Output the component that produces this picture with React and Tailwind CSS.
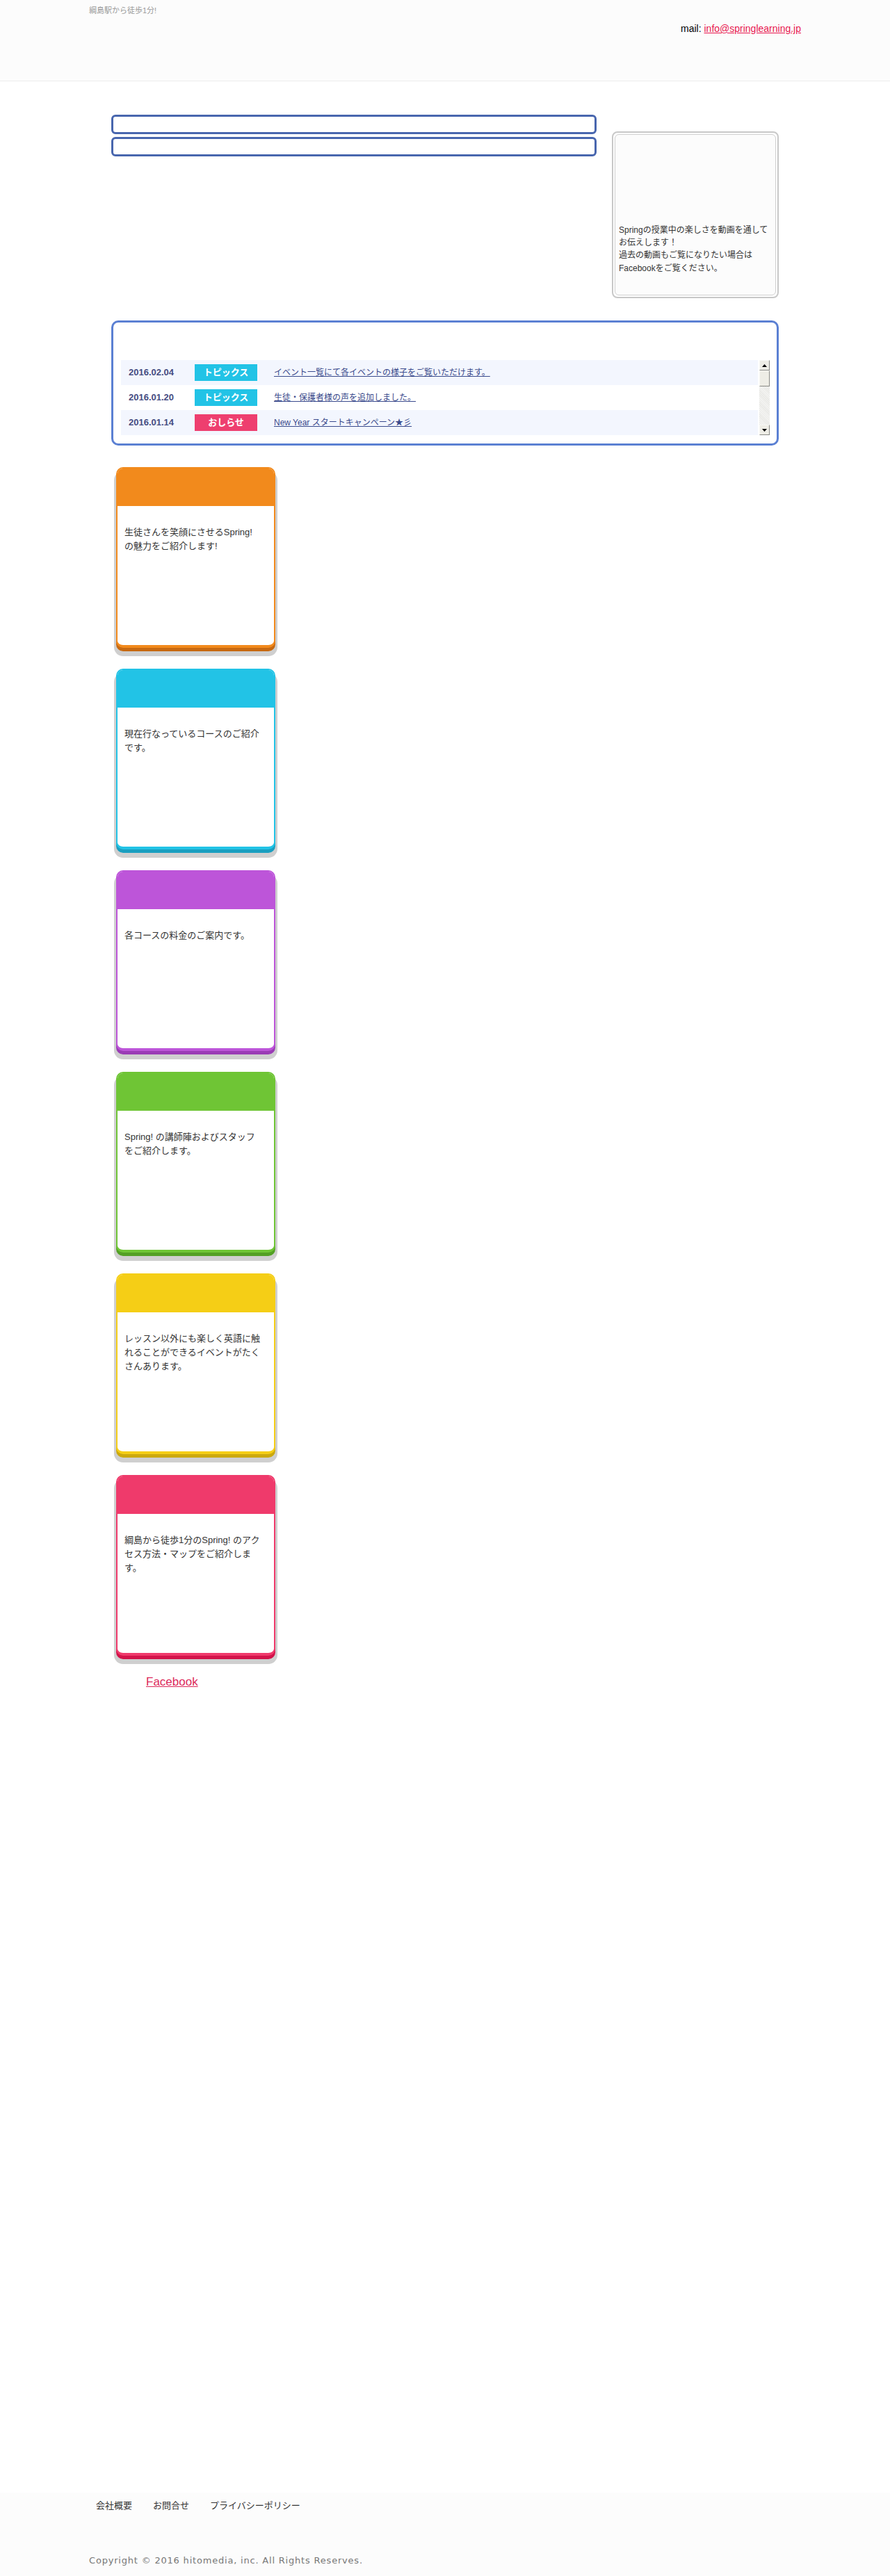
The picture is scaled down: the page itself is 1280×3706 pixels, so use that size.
const cards = [
  {
    head: 'bg-[#f28a1c]',
    border: 'border-[#f28a1c]',
    shadow: 'shadow-[0_5px_0_#c76911,0_9px_0_3px_#cfcfcf]',
    text: ['生徒さんを笑顔にさせるSpring!', 'の魅力をご紹介します!'],
  },
  {
    head: 'bg-[#22c3e6]',
    border: 'border-[#22c3e6]',
    shadow: 'shadow-[0_5px_0_#1a9fc0,0_9px_0_3px_#cfcfcf]',
    text: ['現在行なっているコースのご紹介です。'],
  },
  {
    head: 'bg-[#bd55d9]',
    border: 'border-[#bd55d9]',
    shadow: 'shadow-[0_5px_0_#9a3cb5,0_9px_0_3px_#cfcfcf]',
    text: ['各コースの料金のご案内です。'],
  },
  {
    head: 'bg-[#6fc535]',
    border: 'border-[#6fc535]',
    shadow: 'shadow-[0_5px_0_#53a025,0_9px_0_3px_#cfcfcf]',
    text: ['Spring! の講師陣およびスタッフ', 'をご紹介します。'],
  },
  {
    head: 'bg-[#f5ce16]',
    border: 'border-[#f5ce16]',
    shadow: 'shadow-[0_5px_0_#cca90d,0_9px_0_3px_#cfcfcf]',
    text: ['レッスン以外にも楽しく英語に触れることができるイベントがたくさんあります。'],
  },
  {
    head: 'bg-[#ef3a6b]',
    border: 'border-[#ef3a6b]',
    shadow: 'shadow-[0_5px_0_#d3134a,0_9px_0_3px_#cfcfcf]',
    text: ['綱島から徒歩1分のSpring! のアクセス方法・マップをご紹介します。'],
  },
];

const news = [
  { date: '2016.02.04', tag: 'トピックス', tagBg: 'bg-[#22c3e6]', title: 'イベント一覧にて各イベントの様子をご覧いただけます。', bg: 'bg-[#f3f6fe]' },
  { date: '2016.01.20', tag: 'トピックス', tagBg: 'bg-[#22c3e6]', title: '生徒・保護者様の声を追加しました。', bg: 'bg-white' },
  { date: '2016.01.14', tag: 'おしらせ', tagBg: 'bg-[#ee3f6f]', title: 'New Year スタートキャンペーン★彡', bg: 'bg-[#f3f6fe]' },
];

function ScrollButton({ up }) {
  return (
    <div className="flex h-[15px] w-[15px] items-center justify-center border border-[#f8f8f4] border-r-[#8a8a86] border-b-[#8a8a86] bg-[#eeede6]">
      <svg width="7" height="4" viewBox="0 0 7 4">
        {up ? <polygon points="3.5,0 7,4 0,4" fill="#000" /> : <polygon points="0,0 7,0 3.5,4" fill="#000" />}
      </svg>
    </div>
  );
}

export default function App() {
  return (
    <div className="flex min-h-[3706px] flex-col bg-white font-['Liberation_Sans','Noto_Sans_CJK_JP',sans-serif] text-[#333]">
      {/* ヘッダー */}
      <header className="h-[117px] border-b border-[#ececec] bg-[#fcfcfc]">
        <div className="mx-auto w-[1024px] pt-[7px]">
          <p className="text-[11px] leading-[16px] text-[#9a9a9a]">綱島駅から徒歩1分!</p>
          <p className="mt-[9px] text-right text-[14px] leading-[19px] text-black">
            mail: <a href="#" className="text-[#e8174f] underline">info@springlearning.jp</a>
          </p>
        </div>
      </header>

      <main className="mx-auto w-[960px]">
        <div className="mt-[48px] flex gap-[22px]">
          <div className="w-[698px]">
            <div className="h-[28px] rounded-[6px] border-[3px] border-[#4866ae]" />
            <div className="mt-[4px] h-[28px] rounded-[6px] border-[3px] border-[#4866ae]" />
          </div>
          <div className="mt-[24px] h-[240px] w-[240px] rounded-[8px] border-2 border-[#c8c8c8] p-[2px]">
            <div className="flex h-full flex-col justify-end rounded-[6px] border border-[#d0d0d0] bg-[#fcfcfc] pb-[29px] pl-[5px] text-[12px] leading-[18.3px] whitespace-nowrap text-[#333]">
              <p>Springの授業中の楽しさを動画を通して</p>
              <p>お伝えします！</p>
              <p>過去の動画もご覧になりたい場合は</p>
              <p>Facebookをご覧ください。</p>
            </div>
          </div>
        </div>

        {/* お知らせ */}
        <section className="mt-[32px] h-[180px] rounded-[10px] border-[3px] border-[#5b80d3] px-[11px] pr-[10px] pt-[54px]">
          <div className="flex gap-[2px]">
            <div className="flex-1">
              {news.map((n) => (
                <div key={n.date} className={`flex h-[36px] items-center pl-[11px] ${n.bg}`}>
                  <span className="w-[95px] text-[13px] font-bold text-[#464c82]">{n.date}</span>
                  <span className={`flex h-[24px] w-[90px] items-center justify-center text-[13px] font-bold text-white ${n.tagBg}`}>{n.tag}</span>
                  <a href="#" className="ml-[24px] text-[12px] text-[#3a4a8c] underline">{n.title}</a>
                </div>
              ))}
            </div>
            <div className="flex h-[108px] w-[15px] flex-col bg-[repeating-linear-gradient(45deg,#f4f4f2_0_1px,#e9e9e6_1px_2px)]">
              <ScrollButton up />
              <div className="h-[23px] border border-[#f8f8f4] border-r-[#8a8a86] border-b-[#8a8a86] bg-[#eeede6]" />
              <div className="flex-1" />
              <ScrollButton />
            </div>
          </div>
        </section>

        {/* メニューカード */}
        <div className="mt-[31px] flex flex-col gap-[30px] pl-[7px]">
          {cards.map((c, i) => (
            <div key={i} className={`h-[260px] w-[229px] overflow-hidden rounded-[10px] border-2 border-b-4 bg-white ${c.border} ${c.shadow}`}>
              <div className={`h-[54px] ${c.head}`} />
              <div className="px-[10px] pt-[28px] text-[13px] leading-[20px] text-[#333]">
                {c.text.map((t) => (
                  <p key={t}>{t}</p>
                ))}
              </div>
            </div>
          ))}
        </div>

        <div className="mt-[26px] pl-[50px]">
          <a href="#" className="text-[17px] leading-[22px] text-[#dc2a5b] underline">Facebook</a>
        </div>
      </main>

      {/* フッター */}
      <footer className="mt-auto h-[120px] bg-[#fcfcfc]">
        <div className="mx-auto w-[1024px]">
          <ul className="flex gap-[30px] pl-[10px] pt-[10px] text-[13px] leading-[18px] text-[#333]">
            <li>会社概要</li>
            <li>お問合せ</li>
            <li>プライバシーポリシー</li>
          </ul>
          <p className="mt-[61px] font-['DejaVu_Sans',sans-serif] text-[13px] leading-[18px] tracking-[0.8px] text-[#777]">
            Copyright © 2016 hitomedia, inc. All Rights Reserves.
          </p>
        </div>
      </footer>
    </div>
  );
}
